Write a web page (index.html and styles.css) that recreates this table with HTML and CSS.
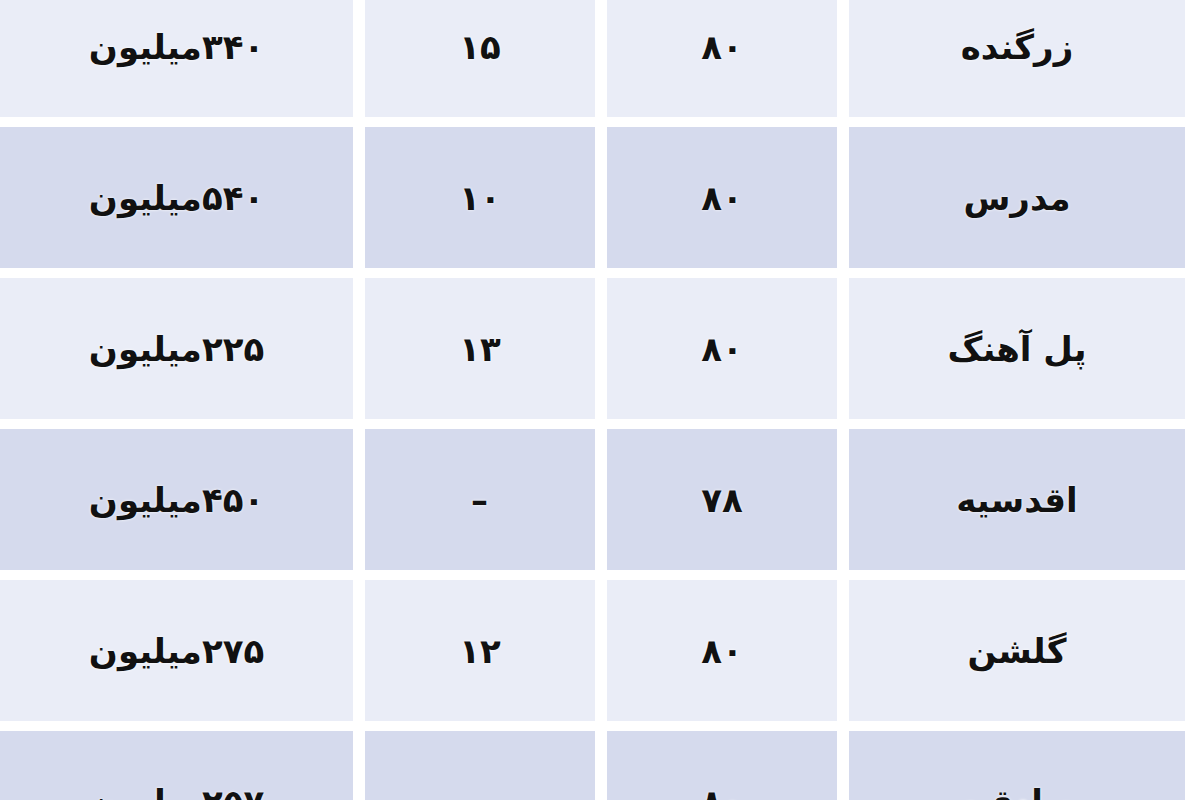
FILE: index.html
```html
<!DOCTYPE html>
<html lang="fa" dir="rtl">
<head>
<meta charset="utf-8">
<title>جدول قیمت</title>
<link rel="stylesheet" href="styles.css">
</head>
<body>
<div class="table">
  <div class="row light">
    <div class="cell">زرگنده</div>
    <div class="cell">۸۰</div>
    <div class="cell">۱۵</div>
    <div class="cell">۳۴۰میلیون</div>
  </div>
  <div class="row dark">
    <div class="cell">مدرس</div>
    <div class="cell">۸۰</div>
    <div class="cell">۱۰</div>
    <div class="cell">۵۴۰میلیون</div>
  </div>
  <div class="row light">
    <div class="cell">پل آهنگ</div>
    <div class="cell">۸۰</div>
    <div class="cell">۱۳</div>
    <div class="cell">۲۲۵میلیون</div>
  </div>
  <div class="row dark">
    <div class="cell">اقدسیه</div>
    <div class="cell">۷۸</div>
    <div class="cell">–</div>
    <div class="cell">۴۵۰میلیون</div>
  </div>
  <div class="row light">
    <div class="cell">گلشن</div>
    <div class="cell">۸۰</div>
    <div class="cell">۱۲</div>
    <div class="cell">۲۷۵میلیون</div>
  </div>
  <div class="row dark">
    <div class="cell">صادقیه</div>
    <div class="cell">۸۰</div>
    <div class="cell">–</div>
    <div class="cell">۲۵۷میلیون</div>
  </div>
</div>
</body>
</html>
```

FILE: styles.css
```css
html, body {
  margin: 0;
  padding: 0;
  background: #ffffff;
  overflow: hidden;
}

body {
  width: 1200px;
  height: 800px;
  font-family: "DejaVu Sans", sans-serif;
  color: #111111;
}

.table {
  display: flex;
  flex-direction: column;
  gap: 10px;
  margin-top: -24px;
  margin-right: 15px;
  width: 1185px;
}

.row {
  display: grid;
  grid-template-columns: 336px 230px 230px 353px;
  column-gap: 12px;
  height: 141px;
}

.cell {
  display: flex;
  align-items: center;
  justify-content: center;
  font-size: 34px;
  font-weight: bold;
  letter-spacing: 1px;
  text-shadow: 0 0 3px #ffffff;
}

.light .cell {
  background: #eaedf7;
}

.dark .cell {
  background: #d5daed;
}
```
